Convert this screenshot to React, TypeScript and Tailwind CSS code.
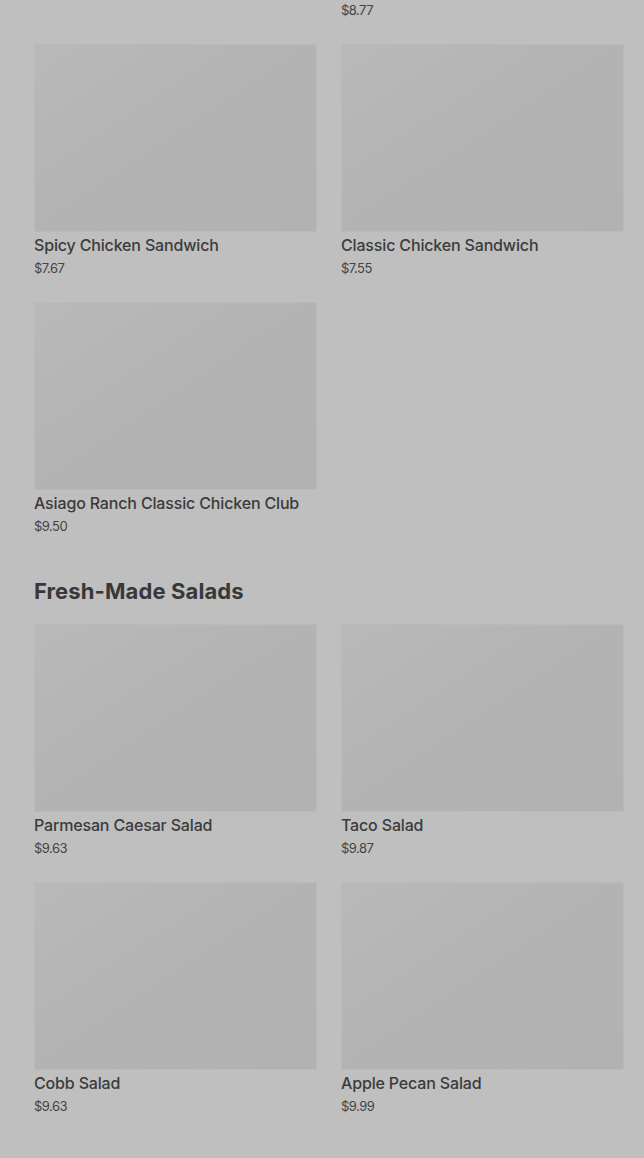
const chicken = [
  { name: "Grilled Chicken Sandwich", price: "$7.99" },
  { name: "Crispy Chicken BLT Sandwich with Smoked Bacon", price: "$8.77" },
  { name: "Spicy Chicken Sandwich", price: "$7.67" },
  { name: "Classic Chicken Sandwich", price: "$7.55" },
  { name: "Asiago Ranch Classic Chicken Club", price: "$9.50" },
];

const salads = [
  { name: "Parmesan Caesar Salad", price: "$9.63" },
  { name: "Taco Salad", price: "$9.87" },
  { name: "Cobb Salad", price: "$9.63" },
  { name: "Apple Pecan Salad", price: "$9.99" },
];

type Item = { name: string; price: string };

function MenuCard({ item }: { item: Item }) {
  return (
    <div className="flex flex-col">
      <div className="h-[188px] w-full border border-[#bababa] bg-linear-to-br from-[#b9b9b9] via-[#b3b3b3] to-[#b2b2b2]" />
      <p className="mt-[3px] text-[16px] leading-5 font-medium tracking-[-0.01em] text-[#3b3b3b]">
        {item.name}
      </p>
      <p className="mt-1 text-[13px] leading-[18px] tracking-[-0.04em] text-[#444]">
        {item.price}
      </p>
    </div>
  );
}

function Grid({ items }: { items: Item[] }) {
  return (
    <div className="grid grid-cols-2 gap-x-6 gap-y-[25px]">
      {items.map((item) => (
        <MenuCard key={item.name} item={item} />
      ))}
    </div>
  );
}

export default function App() {
  return (
    <div
      className="h-[1158px] overflow-hidden bg-[#bfbfbf] pl-[34px] pr-[20px]"
      style={{ fontFamily: "Inter, 'Noto Sans', sans-serif" }}
    >
      <div className="-mt-[234px] pb-11">
        <Grid items={chicken} />

        {/* section heading */}
        <h2 className="mt-[42px] mb-[19px] text-[22px] leading-7 font-bold tracking-[0.005em] text-[#383838]">
          Fresh-Made Salads
        </h2>
        <Grid items={salads} />
      </div>
    </div>
  );
}
